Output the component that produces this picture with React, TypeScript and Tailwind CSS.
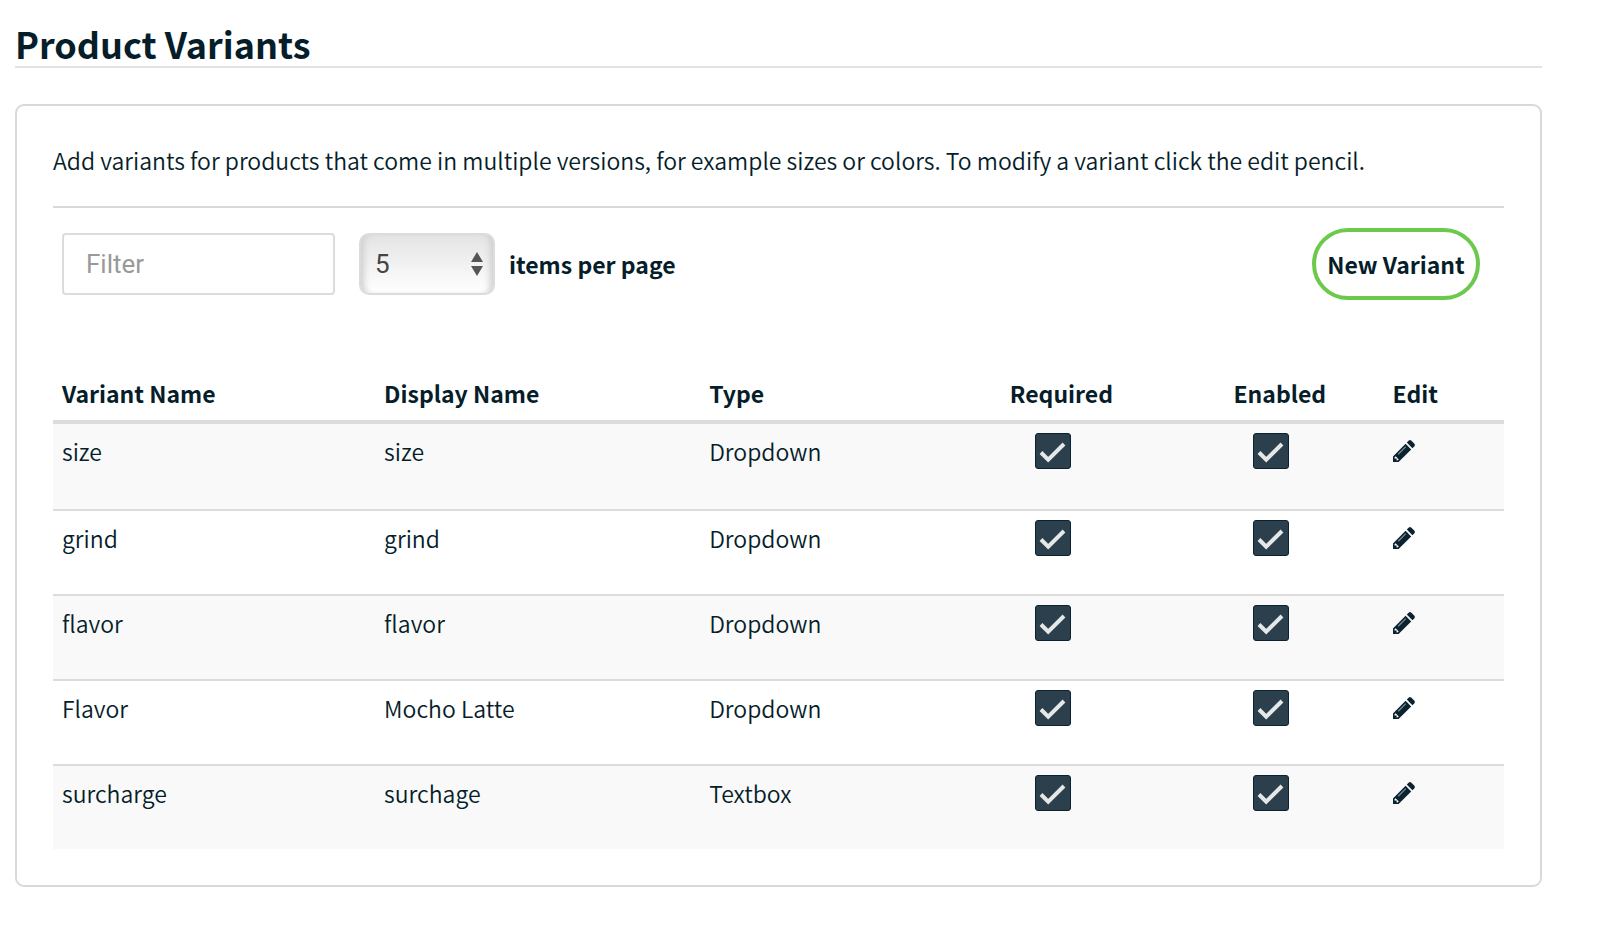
import { useState } from 'react';

interface Variant {
  id: number;
  name: string;
  displayName: string;
  type: string;
  required: boolean;
  enabled: boolean;
}

const initialVariants: Variant[] = [
  { id: 1, name: 'size', displayName: 'size', type: 'Dropdown', required: true, enabled: true },
  { id: 2, name: 'grind', displayName: 'grind', type: 'Dropdown', required: true, enabled: true },
  { id: 3, name: 'flavor', displayName: 'flavor', type: 'Dropdown', required: true, enabled: true },
  { id: 4, name: 'Flavor', displayName: 'Mocho Latte', type: 'Dropdown', required: true, enabled: true },
  { id: 5, name: 'surcharge', displayName: 'surchage', type: 'Textbox', required: true, enabled: true },
];

const PencilIcon = () => (
  <svg viewBox="0 0 22 22" className="block size-[22px]" aria-hidden="true">
    <path
      d="M13.8 2.6 15.6.8a2 2 0 0 1 2.8 0l2.8 2.8a2 2 0 0 1 0 2.8l-1.8 1.8z"
      fill="#0b2230"
    />
    <path d="M12.6 3.8 18.2 9.4 6.8 20.8 5.6 22H.6Q0 22 0 21.4V16.4L1.2 15.2z" fill="#0b2230" />
    <path d="M2.6 16.2 5.8 19.4 4.4 20.6 3.6 20.4V18.4H1.6L1.4 17.6z" fill="#f9f9f9" />
    <path d="M5.2 14.2 12.8 6.6" stroke="#7d8a92" strokeWidth="1.3" />
  </svg>
);

interface CheckBoxProps {
  label: string;
  checked: boolean;
  onChange: () => void;
}

const CheckBox = ({ label, checked, onChange }: CheckBoxProps) => (
  <label className="relative mr-[17px] inline-block size-9 align-top">
    <input
      type="checkbox"
      aria-label={label}
      checked={checked}
      onChange={onChange}
      className="block size-9 appearance-none rounded-[3px] border border-[#0b2230] bg-white checked:bg-[#2b404c]"
    />
    {checked && (
      <svg viewBox="0 0 36 36" className="pointer-events-none absolute inset-0 size-9" aria-hidden="true">
        <path d="M6 19.5 13.2 26.7 29 11" fill="none" stroke="#e6e8e8" strokeWidth="4" />
      </svg>
    )}
  </label>
);

const App = () => {
  const [variants, setVariants] = useState<Variant[]>(initialVariants);
  const [filter, setFilter] = useState('');
  const [perPage, setPerPage] = useState(5);

  const toggle = (id: number, field: 'required' | 'enabled') => {
    setVariants((prev) => prev.map((v) => (v.id === id ? { ...v, [field]: !v[field] } : v)));
  };

  const visible = variants
    .filter((v) => v.name.toLowerCase().includes(filter.toLowerCase()))
    .slice(0, perPage);

  return (
    <div className="min-h-screen bg-white pt-[23px] pr-[58px] pb-16 pl-[15px] font-['Noto_Sans_CJK_SC','Noto_Sans',sans-serif] text-[23px] font-[350] text-[#061d2a]">
      <h1 className="border-b-2 border-[#e3e3e3] pb-[3px] text-[36px] leading-10 font-bold">Product Variants</h1>

      <div className="mt-9 rounded-[9px] border-2 border-[#d9d9d9] p-9">
        <p className="border-b-2 border-[#d9d9d9] pb-7 leading-9">
          Add variants for products that come in multiple versions, for example sizes or colors. To modify a
          variant click the edit pencil.
        </p>

        {/* Toolbar */}
        <div className="mt-5 flex items-center pr-6 pl-[9px]">
          <input
            type="text"
            aria-label="Filter"
            placeholder="Filter"
            value={filter}
            onChange={(e) => setFilter(e.target.value)}
            className="h-[62px] w-[273px] rounded-[4px] border-2 border-[#dcdcdc] px-[22px] font-[Roboto,sans-serif] text-[26px] font-normal placeholder:text-[#999]"
          />
          <div className="relative ml-6">
            <select
              id="per-page"
              value={perPage}
              onChange={(e) => setPerPage(Number(e.target.value))}
              className="block h-[62px] w-[136px] appearance-none rounded-[10px] border-2 border-[#dcdcdc] bg-linear-to-b from-[#e4e4e4] to-white px-[14px] font-[Roboto,sans-serif] text-[26px] font-normal text-[#444] shadow-[inset_7px_0_6px_-4px_#cfcfcf,inset_-7px_0_6px_-4px_#cfcfcf]"
            >
              <option value={5}>5</option>
              <option value={10}>10</option>
              <option value={25}>25</option>
            </select>
            <svg
              viewBox="0 0 12 24"
              className="pointer-events-none absolute top-[19px] right-3 h-6 w-3"
              aria-hidden="true"
            >
              <path d="M6 0 12 10H0zM0 14H12L6 24z" fill="#555" />
            </svg>
          </div>
          <label htmlFor="per-page" className="ml-[14px] font-bold">
            items per page
          </label>
          <button type="button" className="ml-auto h-[72px] w-[168px] rounded-full border-4 border-[#6cc94c] font-bold whitespace-nowrap">
            New Variant
          </button>
        </div>

        <table className="mt-[66px] w-full table-fixed border-separate border-spacing-0">
          <thead>
            <tr className="h-[58px] text-left align-top [&>th]:border-b-4 [&>th]:border-[#dcdcdc] [&>th]:px-[9px] [&>th]:leading-[54px]">
              <th className="w-[22.2%]">Variant Name</th>
              <th className="w-[22.4%]">Display Name</th>
              <th className="w-[17%]">Type</th>
              <th className="w-[15.8%] text-center">Required</th>
              <th className="w-[14.3%] text-center">Enabled</th>
              <th>Edit</th>
            </tr>
          </thead>
          <tbody>
            {visible.map((variant) => (
              <tr
                key={variant.id}
                className="h-[85px] align-top leading-9 odd:bg-[#f9f9f9] [&>td]:px-[9px] [&>td]:pt-[9px] [&:not(:first-child)>td]:border-t-2 [&:not(:first-child)>td]:border-[#dcdcdc]"
              >
                <td>{variant.name}</td>
                <td>{variant.displayName}</td>
                <td>{variant.type}</td>
                <td className="text-center">
                  <CheckBox
                    label={`${variant.name} required`}
                    checked={variant.required}
                    onChange={() => toggle(variant.id, 'required')}
                  />
                </td>
                <td className="text-center">
                  <CheckBox
                    label={`${variant.name} enabled`}
                    checked={variant.enabled}
                    onChange={() => toggle(variant.id, 'enabled')}
                  />
                </td>
                <td>
                  <button type="button" aria-label={`Edit ${variant.name}`} className="flex h-9 items-center">
                    <PencilIcon />
                  </button>
                </td>
              </tr>
            ))}
          </tbody>
        </table>
      </div>
    </div>
  );
};

export default App;
